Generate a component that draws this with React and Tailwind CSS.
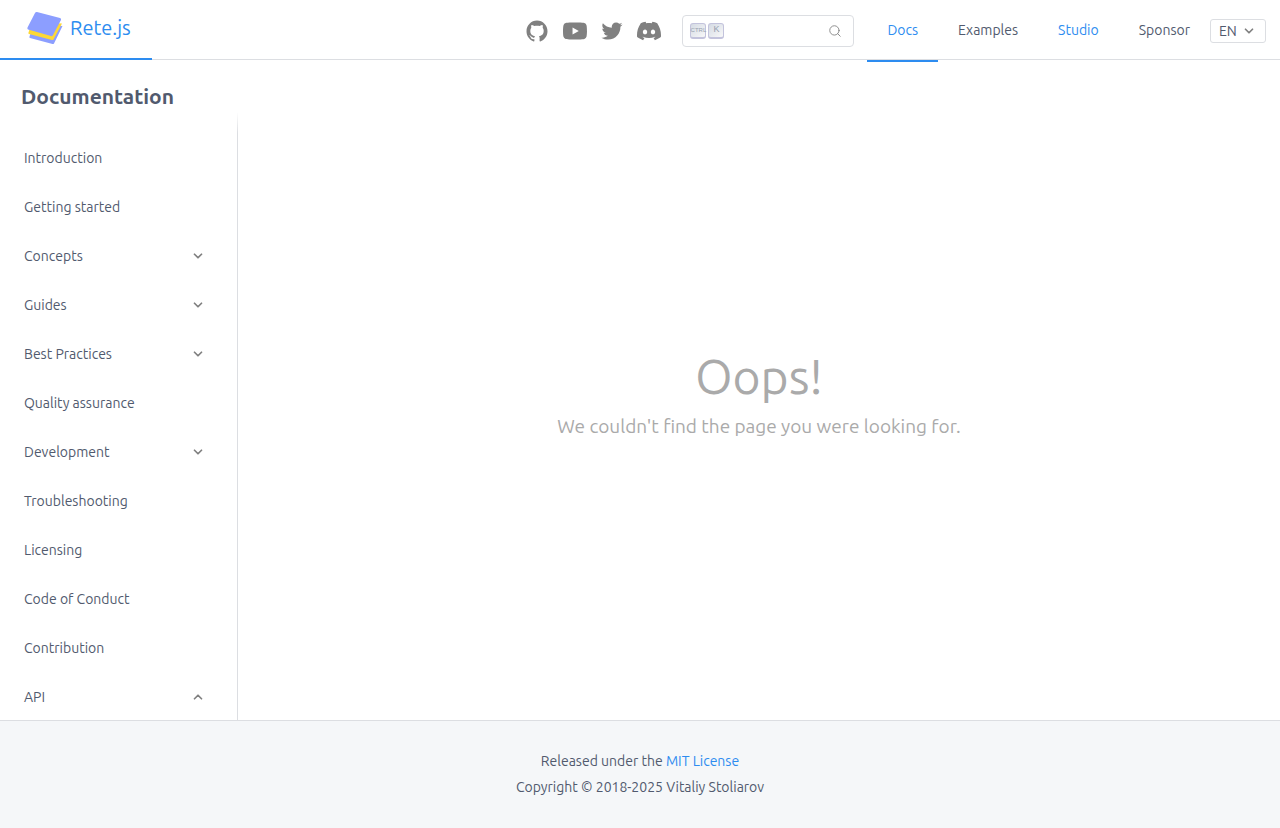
import { IoLogoGithub } from "react-icons/io";
import { SiDiscord, SiYoutube } from "react-icons/si";
import { AiOutlineTwitter } from "react-icons/ai";
import { ChevronDown, ChevronUp, Search } from "lucide-react";

const menu = [
  ["Introduction"],
  ["Getting started"],
  ["Concepts", "down"],
  ["Guides", "down"],
  ["Best Practices", "down"],
  ["Quality assurance"],
  ["Development", "down"],
  ["Troubleshooting"],
  ["Licensing"],
  ["Code of Conduct"],
  ["Contribution"],
  ["API", "up"],
];

const row = "flex h-[49px] w-full items-center justify-between pl-6 pr-8 text-left";

function MenuItem({ label, arrow }) {
  if (!arrow) {
    return <a href="#" className={row}>{label}</a>;
  }
  const Arrow = arrow === "up" ? ChevronUp : ChevronDown;
  return (
    <button type="button" aria-expanded={arrow === "up"} className={row}>
      {label}
      <Arrow className="size-3.5 text-[#808080]" strokeWidth={3} />
    </button>
  );
}

function Key({ wide, children }) {
  return (
    <kbd className="flex h-4 w-4 items-start justify-center rounded-[3px] border border-b-2 border-[#c3c3dc] bg-linear-to-br from-[#d5dbe4] to-[#f8f8f8] text-[#969faf]">
      <span className={wide ? "font-['Liberation_Sans_Narrow','Liberation_Sans',sans-serif] text-[6px] leading-[13px]" : "font-['Liberation_Sans',sans-serif] text-[9px] leading-[11px]"}>
        {children}
      </span>
    </kbd>
  );
}

function Logo() {
  return (
    <svg viewBox="0 0 36 34" className="h-[34px] w-9" aria-hidden="true">
      <path d="M4 21 9 13 35.500 15 27 32.500Q26.500 33.200 25.500 33L3 27Q2 26.500 2.500 25.500Z" fill="#8c9eff" />
      <path d="M3 17 8 11 35 12.500 26.500 28.500Q26 29.300 25 29L2 23Q1 22.500 1.500 21.500Z" fill="#fdd835" />
      <path d="M10 1 33 7Q34.500 7.500 34 9L26 24Q25.500 25.500 24 25L1 18.500Q0 18 .500 16.500L8 2Q8.700 .700 10 1Z" fill="#8c9eff" />
    </svg>
  );
}

export default function App() {
  return (
    <div className="flex min-h-screen flex-col bg-white font-[Ubuntu,'Noto_Sans',sans-serif] text-sm text-[#515a6e]">
      <header className="flex h-[60px] items-stretch border-b border-[#dcdee2] pt-px">
        <a href="#" className="-mb-px flex w-[152px] items-center gap-[7px] border-b-2 border-[#2d8cf0] pb-[3px] pl-[27px] text-xl text-[#2d8cf0]">
          <Logo />
          Rete.js
        </a>
        <div className="ml-auto flex items-center gap-3 pt-px text-[#808080]">
          <a href="#" aria-label="GitHub" className="mr-0.5"><IoLogoGithub className="size-6" /></a>
          <a href="#" aria-label="YouTube"><SiYoutube className="size-6" /></a>
          <a href="#" aria-label="Twitter"><AiOutlineTwitter className="size-[26px]" /></a>
          <a href="#" aria-label="Discord"><SiDiscord className="size-6" /></a>
        </div>
        <label className="mt-3.5 ml-[21px] flex h-8 w-[172px] items-center rounded border border-[#dcdee2] px-[7px]">
          <span className="flex gap-[2px]">
            <Key wide>CTRL</Key>
            <Key>K</Key>
          </span>
          <input type="search" aria-label="Search" className="min-w-0 flex-1 outline-none" />
          <Search className="mr-1 size-3.5 text-[#808080]" strokeWidth={1.5} />
        </label>
        <nav className="ml-[13px] flex">
          <a href="#" className="-mb-[3px] flex items-center border-b-2 border-[#2d8cf0] px-5 pb-px text-[#2d8cf0]">Docs</a>
          <a href="#" className="flex items-center px-5 pb-px">Examples</a>
          <a href="#" className="flex items-center px-5 pb-px text-[#2d8cf0]">Studio</a>
          <a href="#" className="flex items-center px-5 pb-px">Sponsor</a>
        </nav>
        <button type="button" className="mt-[18px] mr-3.5 flex h-6 w-14 items-center justify-between rounded-[3px] border border-[#dcdee2] pr-[9px] pl-2">
          EN
          <ChevronDown className="size-3.5 text-[#808080]" strokeWidth={3} />
        </button>
      </header>
      <div className="flex flex-1">
        <aside className="flex w-[238px] flex-col">
          <h2 className="px-[21px] pt-5 text-[21px] leading-8 font-bold">Documentation</h2>
          <div className="h-[21px] w-px self-end bg-linear-to-b from-white to-[#dcdee2]" />
          <nav className="-mb-px flex-1 border-r border-[#dcdee2]">
            {menu.map(([label, arrow]) => (
              <MenuItem key={label} label={label} arrow={arrow} />
            ))}
          </nav>
        </aside>
        <main className="flex flex-1 flex-col items-center justify-center text-[#aaa]">
          <h1 className="text-5xl leading-[72px]">Oops!</h1>
          <p className="text-[19px] leading-7">We couldn't find the page you were looking for.</p>
        </main>
      </div>
      <footer className="flex h-[108px] flex-col items-center border-t border-[#dcdee2] bg-[#f5f7f9] pt-[27px] leading-[26px]">
        <p>Released under the <a href="#" className="text-[#2d8cf0]">MIT License</a></p>
        <p>Copyright © 2018-2025 Vitaliy Stoliarov</p>
      </footer>
    </div>
  );
}
